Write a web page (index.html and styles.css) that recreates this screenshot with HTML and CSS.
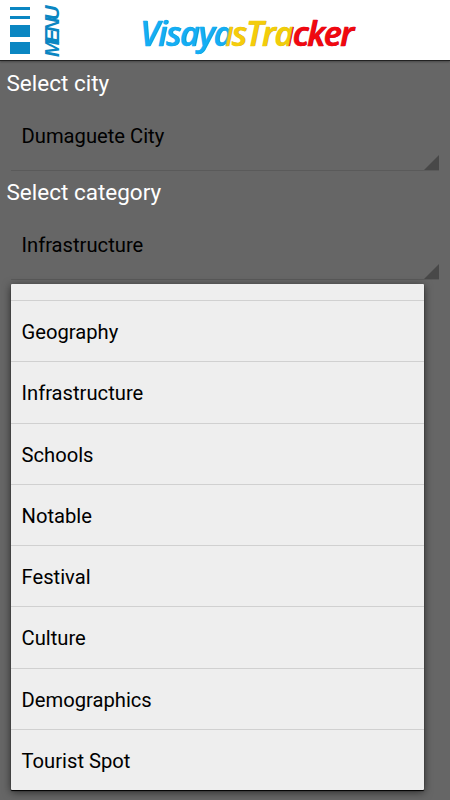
FILE: index.html
```html
<!DOCTYPE html>
<html lang="en">
<head>
    <meta charset="UTF-8">
    <meta name="viewport" content="width=device-width, initial-scale=1.0">
    <title>VisayasTracker</title>
    <link rel="stylesheet" href="styles.css">
</head>
<body>
    <div class="header">
        <div class="menu">
            <div class="bars">
                <span class="thin"></span>
                <span class="thin"></span>
                <span class="thick"></span>
                <span class="thick"></span>
            </div>
            <svg class="menu-text" width="32" height="60" viewBox="0 0 32 60">
                <text transform="translate(22 57) rotate(-90)" textLength="51.5" lengthAdjust="spacing">MENU</text>
            </svg>
        </div>
        <svg class="logo" width="240" height="60" viewBox="0 0 240 60">
            <defs>
                <linearGradient id="bands" gradientUnits="userSpaceOnUse" x1="10" y1="46" x2="216" y2="87">
                    <stop offset="0" stop-color="#14aef4"/>
                    <stop offset="0.4" stop-color="#14aef4"/>
                    <stop offset="0.41" stop-color="#f6cc0c"/>
                    <stop offset="0.695" stop-color="#f0ce0a"/>
                    <stop offset="0.705" stop-color="#f00810"/>
                    <stop offset="1" stop-color="#f00810"/>
                </linearGradient>
                <linearGradient id="bands-dark" gradientUnits="userSpaceOnUse" x1="10" y1="46" x2="216" y2="87">
                    <stop offset="0" stop-color="#1478b0"/>
                    <stop offset="0.4" stop-color="#1478b0"/>
                    <stop offset="0.41" stop-color="#a88408"/>
                    <stop offset="0.695" stop-color="#a88408"/>
                    <stop offset="0.705" stop-color="#a00008"/>
                    <stop offset="1" stop-color="#a00008"/>
                </linearGradient>
            </defs>
            <text x="11.6" y="46.4" textLength="214" lengthAdjust="spacing" fill="url(#bands-dark)">VisayasTracker</text>
            <text class="face" x="11" y="45.8" textLength="214" lengthAdjust="spacing" fill="url(#bands)" stroke="url(#bands)">VisayasTracker</text>
        </svg>
    </div>
    <div class="content">
        <div class="label">Select city</div>
        <div class="spinner">Dumaguete City</div>
        <div class="label">Select category</div>
        <div class="spinner">Infrastructure</div>
    </div>
    <ul class="dropdown">
        <li class="cut"></li>
        <li>Geography</li>
        <li>Infrastructure</li>
        <li>Schools</li>
        <li>Notable</li>
        <li>Festival</li>
        <li>Culture</li>
        <li>Demographics</li>
        <li>Tourist Spot</li>
    </ul>
</body>
</html>
```
FILE: styles.css
```css
body {
    margin: 0;
    height: 800px;
    background: #666;
    font-family: Roboto, sans-serif;
    overflow: hidden;
    position: relative;
}
.header {
    height: 60px;
    background: #fff;
    border-bottom: 1px solid #222;
    box-shadow: 0 1px 2px rgba(0,0,0,0.3);
    display: flex;
}
.header svg {
    overflow: visible;
}
.menu {
    display: flex;
    width: 129px;
    padding-left: 10px;
    box-sizing: border-box;
}
.bars {
    width: 20px;
    padding-top: 7px;
}
.bars span {
    display: block;
    background: #0a86c2;
}
.thin {
    height: 3px;
    margin-bottom: 6px;
}
.thick {
    height: 12px;
    margin-bottom: 5px;
}
.menu-text {
    margin-left: 7px;
}
.menu-text text {
    font: italic bold 20.5px "Liberation Sans", sans-serif;
    fill: #0a86c2;
}
.logo text {
    font: italic 600 34px "Open Sans", sans-serif;
}
.logo .face {
    stroke-width: 0.4px;
}
.content {
    padding-top: 1px;
}
.label {
    color: #fff;
    font-size: 22.5px;
    line-height: 28px;
    padding: 7px 0 2px 6.5px;
}
.spinner {
    position: relative;
    height: 71px;
    margin: 0 11px;
    padding-left: 10.5px;
    border-bottom: 1px solid #5a5a5a;
    font-size: 20.2px;
    line-height: 75px;
    color: #000;
}
.spinner::after {
    content: "";
    position: absolute;
    right: 0;
    bottom: 0;
    width: 15px;
    height: 15px;
    background: #484848;
    clip-path: polygon(100% 0, 100% 100%, 0 100%);
}
.dropdown {
    position: absolute;
    left: 11px;
    top: 284px;
    width: 413px;
    height: 506px;
    margin: 0;
    padding: 0;
    list-style: none;
    background: #eee;
    border-radius: 1px;
    box-shadow: 0 1px 1px #000, 0 2px 8px rgba(0,0,0,0.6);
    overflow: hidden;
}
.dropdown li {
    height: 61.25px;
    box-sizing: border-box;
    padding-left: 10.5px;
    border-bottom: 1px solid #d0d0d0;
    font-size: 20.2px;
    line-height: 62.2px;
    color: #000;
}
.dropdown .cut {
    height: 17px;
}
.dropdown li:last-child {
    border-bottom: none;
}
```
